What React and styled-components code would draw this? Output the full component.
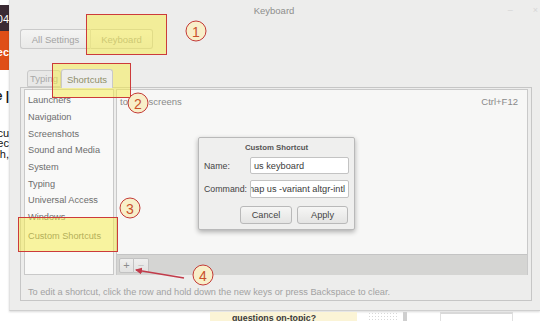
import React from "react";
import styled, { createGlobalStyle } from "styled-components";

const Global = createGlobalStyle`
  html, body { margin: 0; padding: 0; background: #ffffff; }
  body { font-family: "Liberation Sans", Arial, sans-serif; width: 540px; height: 321px; overflow: hidden; }
  * { box-sizing: border-box; }
`;

const Page = styled.div`
  position: relative;
  width: 540px;
  height: 321px;
  overflow: hidden;
  display: flex;
  flex-direction: column;
`;

const Top = styled.div`
  display: flex;
  height: 311px;
`;

/* web page visible behind the window */
const BehindStrip = styled.div`
  width: 9px;
  flex: none;
  display: flex;
  flex-direction: column;
  background: #ffffff;
  overflow: hidden;
`;

const StripBand = styled.div`
  height: ${(p) => p.h}px;
  background: ${(p) => p.bg};
  color: ${(p) => p.fg};
  font-size: ${(p) => p.fs || 11}px;
  font-weight: ${(p) => p.fw || 400};
  line-height: ${(p) => p.lh || 11}px;
  padding-top: ${(p) => p.pt || 0}px;
  display: flex;
  flex-direction: column;
  align-items: flex-end;
  white-space: nowrap;
`;

const StripLine = styled.div`
  display: flex;
  justify-content: flex-end;
  width: 9px;
  margin-top: ${(p) => p.mt || 0}px;
  font-weight: ${(p) => (p.bold ? 700 : "inherit")};
  font-size: ${(p) => (p.big ? "12px" : "inherit")};
`;

const Window = styled.div`
  flex: 1;
  background: #ededec;
  display: flex;
  flex-direction: column;
  padding: 0 8px 9px 10px;
  border-left: 1px solid #e2e2e2;
  border-bottom: 1px solid #cfcfcf;
  box-shadow: 0 1px 2px rgba(0,0,0,0.15);
`;

const TitleBar = styled.div`
  height: 20px;
  display: flex;
  align-items: center;
  justify-content: center;
  position: relative;
`;

const Title = styled.div`
  font-size: 9.5px;
  color: #8d8d8d;
  margin-left: -4px;
`;

const WinControls = styled.div`
  position: absolute;
  right: -6px;
  top: 5px;
  display: flex;
  gap: 20px;
  color: #d6d6d6;
  font-size: 9px;
`;

const Header = styled.div`
  margin-top: 9px;
  height: 20px;
  display: flex;
`;

const NavButton = styled.div`
  width: ${(p) => p.w}px;
  height: 20px;
  display: flex;
  align-items: center;
  justify-content: center;
  font-size: 9.5px;
  color: #a3a3a3;
  background: linear-gradient(#f4f4f3, #e9e9e8);
  border: 1px solid #cacaca;
  border-radius: ${(p) => (p.first ? "3px 0 0 3px" : "0 3px 3px 0")};
  border-left-width: ${(p) => (p.first ? 1 : 0)}px;
  border-right-color: ${(p) => (p.first ? "#d6d6d6" : "#cacaca")};
`;

const TabStrip = styled.div`
  margin-top: 19px;
  height: 19px;
  display: flex;
  align-items: flex-end;
  padding-left: 7px;
`;

const Tab = styled.div`
  width: ${(p) => p.w}px;
  height: ${(p) => (p.active ? 19 : 17)}px;
  display: flex;
  align-items: center;
  justify-content: center;
  font-size: 9.5px;
  color: ${(p) => (p.active ? "#8e8e6a" : "#a8a8a8")};
  background: ${(p) => (p.active ? "#eeeeed" : "#e8e8e7")};
  border: 1px solid #c9c9c9;
  border-bottom: ${(p) => (p.active ? "none" : "1px solid #c9c9c9")};
  border-radius: 3px 3px 0 0;
  margin-bottom: ${(p) => (p.active ? -1 : 0)}px;
  position: relative;
  z-index: ${(p) => (p.active ? 1 : 0)};
`;

const Notebook = styled.div`
  height: 214px;
  border: 1px solid #c6c6c6;
  background: #ededec;
  display: flex;
  flex-direction: column;
  padding: 1px 3px 0 3px;
`;

const Panes = styled.div`
  display: grid;
  grid-template-columns: 90px 1fr;
  column-gap: 2px;
  height: 185px;
`;

const SectionList = styled.div`
  background: #f9f9f8;
  border: 1px solid #c9c9c9;
  padding-top: 2px;
  display: flex;
  flex-direction: column;
`;

const SectionItem = styled.div`
  height: 16.7px;
  display: flex;
  align-items: center;
  padding-left: 3px;
  font-size: 9.2px;
  color: #6d6d6d;
  margin-top: ${(p) => (p.selected ? 2 : 0)}px;
  white-space: nowrap;
`;

const RightPane = styled.div`
  display: flex;
  flex-direction: column;
  border: 1px solid #c9c9c9;
  border-bottom: none;
`;

const Tree = styled.div`
  height: 164px;
  background: #f7f7f6;
`;

const TreeRow = styled.div`
  height: 22px;
  display: flex;
  align-items: center;
  justify-content: space-between;
  padding: 0 9px 0 3px;
  font-size: 9.5px;
  color: #8a8a8a;
`;

const Toolbar = styled.div`
  height: 21px;
  background: #d5d5d3;
  border-top: 1px solid #c4c4c4;
  display: flex;
  align-items: center;
  padding-left: 2px;
`;

const ToolButton = styled.div`
  width: 15px;
  height: 15px;
  display: flex;
  align-items: center;
  justify-content: center;
  font-size: 11px;
  color: ${(p) => (p.disabled ? "#c4c4c4" : "#8c8c8c")};
  background: linear-gradient(#efefee, #e2e2e1);
  border: 1px solid #c2c2c2;
  border-radius: ${(p) => (p.first ? "2px 0 0 2px" : "0 2px 2px 0")};
  border-left-width: ${(p) => (p.first ? 1 : 0)}px;
`;

const Help = styled.div`
  flex: 1;
  display: flex;
  align-items: center;
  padding: 10px 0 0 4px;
  font-size: 9.2px;
  color: #a2a2a2;
  white-space: nowrap;
`;

const Below = styled.div`
  flex: 1;
  position: relative;
  display: flex;
  align-items: flex-start;
  padding-left: 210px;
  padding-top: 1px;
  gap: 11px;
`;

const Question = styled.div`
  width: 147px;
  height: 12px;
  background: #fbf4d6;
  font-size: 8.8px;
  font-weight: 700;
  color: #3a3a3a;
  padding: 1px 0 0 22px;
  white-space: nowrap;
`;

const Dots = styled.div`
  width: 30px;
  height: 12px;
  background-image: radial-gradient(#d8d8d8 0.6px, transparent 0.8px);
  background-size: 3px 3px;
`;

const VBar = styled.div`
  width: 4px;
  height: 12px;
  margin-left: -6px;
  background: #cfcfcf;
`;

const SideBox = styled.div`
  width: 73px;
  height: 12px;
  margin-left: 22px;
  border-top: 2px solid #d9d9d9;
  border-left: 1px solid #e0e0e0;
  border-right: 1px solid #e0e0e0;
`;

/* Dialog floating over the pane */
const Dialog = styled.div`
  position: absolute;
  left: 198px;
  top: 137px;
  width: 157px;
  height: 93px;
  background: #efefee;
  border: 1px solid #b9b9b9;
  border-radius: 2px;
  box-shadow: 0 2px 5px rgba(0,0,0,0.3);
  display: flex;
  flex-direction: column;
  padding: 0 5px 0 5px;
`;

const DialogTitle = styled.div`
  height: 19px;
  display: flex;
  align-items: center;
  justify-content: center;
  font-size: 7.8px;
  font-weight: 700;
  color: #555;
`;

const FormGrid = styled.div`
  display: grid;
  grid-template-columns: 46px 99px;
  row-gap: 6px;
  align-items: center;
`;

const FieldLabel = styled.div`
  font-size: 8.8px;
  color: #444;
  white-space: nowrap;
`;

const Field = styled.div`
  width: 99px;
  min-width: 0;
  height: ${(p) => p.h}px;
  background: #ffffff;
  border: 1px solid #c3c3c3;
  border-radius: 2px;
  font-size: 9.2px;
  color: #3a3a3a;
  display: flex;
  align-items: center;
  justify-content: ${(p) => (p.end ? "flex-end" : "flex-start")};
  padding: 0 3px 0 3px;
  overflow: hidden;
  white-space: nowrap;
`;

const FieldText = styled.span`
  flex: none;
`;

const DialogButtons = styled.div`
  margin-top: 8px;
  display: flex;
  justify-content: flex-end;
  gap: 5px;
  padding-right: 1px;
`;

const DialogButton = styled.div`
  width: ${(p) => p.w}px;
  height: 18px;
  display: flex;
  align-items: center;
  justify-content: center;
  font-size: 9.2px;
  color: #444;
  background: linear-gradient(#f6f6f5, #e4e4e3);
  border: 1px solid #b9b9b9;
  border-radius: 3px;
`;

/* Annotations */
const Highlight = styled.div`
  position: absolute;
  background: rgba(247, 237, 70, 0.5);
  border: 1.5px solid #cc3b3b;
  pointer-events: none;
`;

const Marker = styled.div`
  position: absolute;
  width: 21px;
  height: 21px;
  border-radius: 50%;
  border: 1.5px solid #c43a36;
  background: #f8efc9;
  color: #c9512c;
  font-size: 14px;
  line-height: 1;
  display: flex;
  align-items: center;
  justify-content: center;
  transform: translate(-50%, -50%);
`;

const ArrowSvg = styled.svg`
  position: absolute;
  left: 0;
  top: 0;
  pointer-events: none;
`;

const sections = [
  "Launchers",
  "Navigation",
  "Screenshots",
  "Sound and Media",
  "System",
  "Typing",
  "Universal Access",
  "Windows",
];

export default function App() {
  return (
    <>
      <Global />
      <Page>
        <Top>
          <BehindStrip>
            <StripBand h={5} bg="#ffffff" />
            <StripBand h={26} bg="#3a2a33" fg="#ffffff" pt={9}>
              <StripLine>14.04</StripLine>
            </StripBand>
            <StripBand h={39} bg="#df4e17" fg="#ffffff" fw={700} pt={16}>
              <StripLine>Spec</StripLine>
            </StripBand>
            <StripBand h={240} bg="#ffffff" fg="#111" pt={21} lh={10.5}>
              <StripLine bold big>e |</StripLine>
              <StripLine mt={26}>focu</StripLine>
              <StripLine>spec</StripLine>
              <StripLine>wish,</StripLine>
            </StripBand>
          </BehindStrip>
          <Window>
            <TitleBar>
              <Title>Keyboard</Title>
              <WinControls>
                <span>–</span>
                <span>×</span>
              </WinControls>
            </TitleBar>
            <Header>
              <NavButton first w={71}>All Settings</NavButton>
              <NavButton w={62}>Keyboard</NavButton>
            </Header>
            <TabStrip>
              <Tab w={34}>Typing</Tab>
              <Tab w={52} active>Shortcuts</Tab>
            </TabStrip>
            <Notebook>
              <Panes>
                <SectionList>
                  {sections.map((s) => (
                    <SectionItem key={s}>{s}</SectionItem>
                  ))}
                  <SectionItem selected>Custom Shortcuts</SectionItem>
                </SectionList>
                <RightPane>
                  <Tree>
                    <TreeRow>
                      <span>toggle screens</span>
                      <span>Ctrl+F12</span>
                    </TreeRow>
                  </Tree>
                  <Toolbar>
                    <ToolButton first>+</ToolButton>
                    <ToolButton disabled>−</ToolButton>
                  </Toolbar>
                </RightPane>
              </Panes>
              <Help>
                To edit a shortcut, click the row and hold down the new keys or press Backspace to clear.
              </Help>
            </Notebook>
          </Window>
        </Top>
        <Below>
          <Question>questions on-topic?</Question>
          <Dots />
          <VBar />
          <SideBox />
        </Below>

        <Dialog>
          <DialogTitle>Custom Shortcut</DialogTitle>
          <FormGrid>
            <FieldLabel>Name:</FieldLabel>
            <Field h={17}><FieldText>us keyboard</FieldText></Field>
            <FieldLabel>Command:</FieldLabel>
            <Field h={18} end><FieldText>setxkbmap us -variant altgr-intl</FieldText></Field>
          </FormGrid>
          <DialogButtons>
            <DialogButton w={52}>Cancel</DialogButton>
            <DialogButton w={51}>Apply</DialogButton>
          </DialogButtons>
        </Dialog>

        <Highlight style={{ left: 86, top: 14, width: 81, height: 41 }} />
        <Highlight style={{ left: 52, top: 63, width: 79, height: 35 }} />
        <Highlight style={{ left: 18, top: 217, width: 100, height: 35 }} />

        <ArrowSvg width="540" height="321" viewBox="0 0 540 321">
          <defs>
            <marker id="ah" markerWidth="8" markerHeight="8" refX="6" refY="4" orient="auto" markerUnits="userSpaceOnUse">
              <path d="M0,0.5 L7,4 L0,7.5 Z" fill="#c23b4a" />
            </marker>
          </defs>
          <line x1="184" y1="278" x2="136" y2="270" stroke="#c23b4a" strokeWidth="1.5" markerEnd="url(#ah)" />
        </ArrowSvg>

        <Marker style={{ left: 196, top: 31 }}>1</Marker>
        <Marker style={{ left: 138, top: 103 }}>2</Marker>
        <Marker style={{ left: 130, top: 208 }}>3</Marker>
        <Marker style={{ left: 203, top: 275 }}>4</Marker>
      </Page>
    </>
  );
}
